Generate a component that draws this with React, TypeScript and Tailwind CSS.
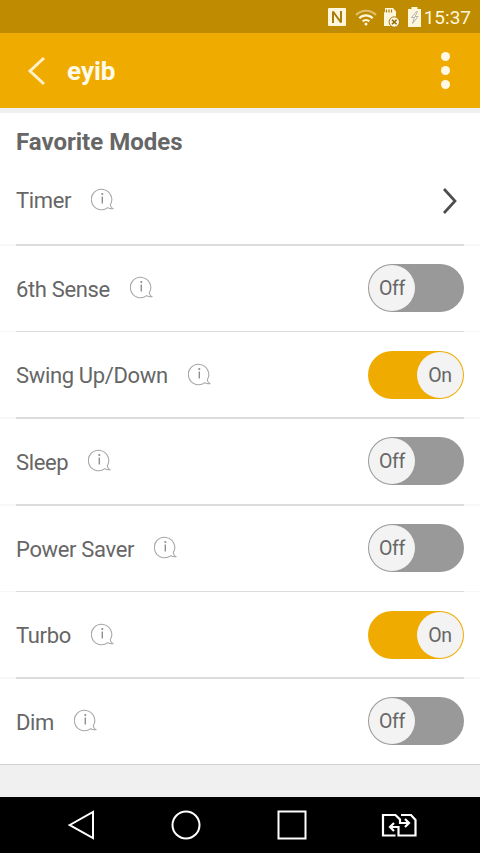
import clsx from "clsx";
import { useState } from "react";

type Mode = {
  name: string;
  on: boolean;
};

const INITIAL_MODES: Mode[] = [
  { name: "6th Sense", on: false },
  { name: "Swing Up/Down", on: true },
  { name: "Sleep", on: false },
  { name: "Power Saver", on: false },
  { name: "Turbo", on: true },
  { name: "Dim", on: false },
];

function StatusBar() {
  return (
    <div className="h-[33px] shrink-0 bg-[#bf8b00] flex items-center justify-end pr-[9px] pt-px text-[#fff6dc]">
      <svg width="18" height="18" viewBox="0 0 18 18" className="mr-[9px]">
        <rect width="18" height="18" rx="1" fill="currentColor" />
        <path
          d="M5 15V3.500l8 11V3"
          fill="none"
          stroke="#a97c0c"
          strokeWidth="2"
          strokeLinejoin="bevel"
        />
      </svg>
      <svg
        width="22"
        height="17"
        viewBox="0 0 22 17"
        fill="none"
        stroke="currentColor"
        strokeWidth="2.200"
        className="mr-[6px]"
      >
        <path d="M1 6C6.500 .3 15.500 .3 21 6" opacity="0.5" />
        <path d="M4.300 9.200c3.700-3.900 9.700-3.900 13.400 0" />
        <path d="M7.700 12.400c1.900-1.900 4.700-1.900 6.600 0" />
        <circle cx="11" cy="14.900" r="1.500" fill="currentColor" stroke="none" />
      </svg>
      <svg width="17" height="21" viewBox="0 0 17 21" className="mr-2">
        <path d="M2 1h8l3 3.500V19H1V5.500L2 5z" fill="currentColor" />
        <path
          d="M3.500 2.500v3M6 2.500v3M8.500 2.500v3"
          stroke="#a97c0c"
          strokeWidth="1.200"
        />
        <circle
          cx="11.300"
          cy="15"
          r="5.200"
          fill="currentColor"
          stroke="#a97c0c"
          strokeWidth="1"
        />
        <path
          d="M9 12.700l4.600 4.600M13.600 12.700L9 17.300"
          stroke="#8f690d"
          strokeWidth="1.600"
        />
      </svg>
      <svg width="13" height="20" viewBox="0 0 13 20" className="mr-[3px]">
        <path d="M3.500 0h6v2H13v18H0V2h3.500z" fill="currentColor" />
        <path
          d="M8.500 4.500l-5 6h3l-2 6 5.500-7H7l2.500-5z"
          fill="#fff"
          stroke="#b5b3a8"
          strokeWidth="1"
        />
      </svg>
      <span className="text-[19px] leading-none">15:37</span>
    </div>
  );
}

function Header() {
  return (
    <header className="h-[75px] shrink-0 bg-[#f0ab00] flex items-center pl-[27px] pr-[30px]">
      <button aria-label="Back">
        <svg width="19" height="30" viewBox="0 0 19 30" className="block">
          <path
            d="M17 2L3 15l14 13"
            fill="none"
            stroke="#fff0c8"
            strokeWidth="3"
          />
        </svg>
      </button>
      <h1 className="ml-[21px] mt-px text-[26px] leading-none font-bold text-[#fffaea]">
        eyib
      </h1>
      <button
        aria-label="More"
        className="ml-auto flex flex-col gap-[4.500px]"
      >
        <span className="size-[9.500px] rounded-full bg-[#fff8e6]" />
        <span className="size-[9.500px] rounded-full bg-[#fff8e6]" />
        <span className="size-[9.500px] rounded-full bg-[#fff8e6]" />
      </button>
    </header>
  );
}

function InfoIcon() {
  return (
    <svg
      width="23"
      height="23"
      viewBox="0 0 23 23"
      fill="none"
      stroke="#a6a6a6"
      strokeWidth="1.100"
      className="ml-5 -mt-px"
    >
      <path d="M19.300 16.800A10.200 10.200 0 1 0 16.800 19.600c1.300 1 3 1.300 4.900 1-1.400-.9-2.300-2.200-2.400-3.800z" />
      <path d="M11.300 8.500v7" stroke="#8f8f8f" strokeWidth="1.400" />
      <circle cx="11.300" cy="6" r="1.100" fill="#8f8f8f" stroke="none" />
    </svg>
  );
}

function Divider() {
  return (
    <div className="px-4 bg-[#f7f7f7]">
      <div className="h-[1.670px] bg-[#dcdcdc]" />
    </div>
  );
}

function Toggle({ on, onClick }: { on: boolean; onClick: () => void }) {
  return (
    <button
      role="switch"
      aria-checked={on}
      onClick={onClick}
      className={clsx(
        "w-24 h-12 p-px rounded-full flex items-center",
        { "bg-[#f0ab00] justify-end": on },
        { "bg-[#999]": !on }
      )}
    >
      <span className="size-[46px] pt-px rounded-full bg-[#f3f3f3] grid place-items-center text-[19.500px] tracking-[-0.3px] text-[#666]">
        {on ? "On" : "Off"}
      </span>
    </button>
  );
}

function App() {
  const [modes, setModes] = useState(INITIAL_MODES);

  function toggleMode(name: string) {
    setModes((prev) =>
      prev.map((mode) => (mode.name === name ? { ...mode, on: !mode.on } : mode))
    );
  }

  return (
    <div className="h-screen flex flex-col bg-[#f0f0f0] font-[Roboto,'Liberation_Sans',sans-serif] text-[#666]">
      <StatusBar />
      <Header />
      <main className="mt-[5px] bg-white border-b border-[#d2d2d2]">
        <h2 className="px-4 pt-[15px] text-[24px] leading-[28px] font-bold">
          Favorite Modes
        </h2>
        <div className="mx-4 h-[88px] flex items-center">
          <span className="pt-px text-[22px] tracking-[-0.35px]">Timer</span>
          <InfoIcon />
          <svg width="15" height="28" viewBox="0 0 15 28" className="ml-auto mr-[7px] mt-px">
            <path
              d="M2 2l11 12L2 26"
              fill="none"
              stroke="#4d4d4d"
              strokeWidth="2.700"
            />
          </svg>
        </div>
        {modes.map((mode) => (
          <div key={mode.name}>
            <Divider />
            <div className="mx-4 h-[85px] flex items-center">
              <span className="pt-[2px] text-[22px] tracking-[-0.35px]">
                {mode.name}
              </span>
              <InfoIcon />
              <div className="ml-auto">
                <Toggle on={mode.on} onClick={() => toggleMode(mode.name)} />
              </div>
            </div>
          </div>
        ))}
      </main>
      <nav className="mt-auto h-14 shrink-0 bg-black flex items-center justify-between pl-[68px] pr-[63px]">
        <svg width="28" height="30" viewBox="0 0 28 30" fill="none" stroke="#fff" strokeWidth="2">
          <path d="M1.800 15L25 2v26z" />
        </svg>
        <svg width="30" height="30" viewBox="0 0 30 30" fill="none" stroke="#fff" strokeWidth="2" className="ml-px">
          <circle cx="15" cy="15" r="13.500" />
        </svg>
        <svg width="30" height="30" viewBox="0 0 30 30" fill="none" stroke="#fff" strokeWidth="2" className="ml-px">
          <rect x="1.500" y="1.500" width="27" height="27" />
        </svg>
        <svg width="36" height="24" viewBox="0 0 36 24" fill="none" stroke="#fff" strokeWidth="2.200">
          <path d="M14.500 22.500H2V2h12.500l4.500 4.500V10h8.500M20 2h10l4.500 5v15.500H17.500V14H9.500" />
          <path d="M24 6l4 4-4 4M13 10l-4 4 4 4" />
        </svg>
      </nav>
    </div>
  );
}

export default App;
